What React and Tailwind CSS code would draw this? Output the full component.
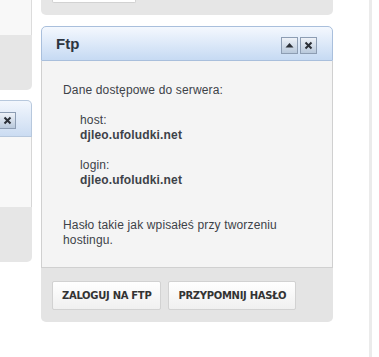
import React from 'react';

const HeadBtn = ({ children }) => (
  <div className="w-[17px] h-[17px] border border-[#8d9db3] bg-gradient-to-b from-[#eef2f8] to-[#b9c9dc] flex items-center justify-center">
    {children}
  </div>
);

const CloseIcon = () => (
  <svg width="9" height="9" viewBox="0 0 9 9">
    <path d="M1.5 1.5 L7.5 7.5 M7.5 1.5 L1.5 7.5" stroke="#2b2f36" strokeWidth="2" />
  </svg>
);

const UpIcon = () => (
  <svg width="9" height="6" viewBox="0 0 9 6">
    <path d="M0.5 5.5 L4.5 1 L8.5 5.5 Z" fill="#2b2f36" />
  </svg>
);

const FootBtn = ({ label }) => (
  <button className="h-[29px] px-[9px] bg-gradient-to-b from-[#ffffff] to-[#f0f0f0] border border-[#d2d2d2] rounded-[2px] text-[10px] font-bold text-[#333] font-['DejaVu_Sans',sans-serif] tracking-[-0.3px]">
    {label}
  </button>
);

export default function App() {
  return (
    <div className="w-[379px] h-[357px] bg-white flex overflow-hidden font-['Liberation_Sans',Arial,sans-serif]">
      {/* left column, cut off */}
      <div className="w-[32px] shrink-0 flex flex-col">
        <div className="h-[35px] bg-[#f8f8f8] border-r border-[#dcdcdc]" />
        <div className="h-[55px] bg-[#e6e6e6] rounded-br-[5px]" />
        <div className="mt-[10px] flex flex-col">
          <div className="h-[37px] rounded-tr-[5px] border border-l-0 border-[#b7c8dd] bg-gradient-to-b from-[#f3f7fd] to-[#cbdcf2] flex items-center">
            <div className="w-[16px] h-[17px] border border-l-0 border-[#8d9db3] bg-gradient-to-b from-[#eef2f8] to-[#b9c9dc] flex items-center justify-center mt-[4px]">
              <CloseIcon />
            </div>
          </div>
          <div className="h-[70px] bg-[#f8f8f8] border-r border-[#d6d6d6]" />
          <div className="h-[55px] bg-[#e6e6e6] rounded-br-[5px]" />
        </div>
      </div>

      {/* main column */}
      <div className="ml-[9px] w-[292px] shrink-0 flex flex-col">
        <div className="h-[15px] bg-[#e6e6e6] rounded-b-[5px] relative">
          <div className="absolute left-[11px] top-0 w-[84px] h-[3px] bg-white border border-t-0 border-[#d2d2d2] rounded-b-[2px]" />
        </div>

        <div className="mt-[11px] flex flex-col">
          <div className="h-[35px] rounded-t-[5px] border border-[#a9bfdc] bg-gradient-to-b from-[#f4f8fe] to-[#c6daf3] flex items-center justify-between pl-[14px] pr-[15px]">
            <span className="text-[15px] font-bold text-[#2d3540] pt-[1px]">Ftp</span>
            <div className="flex gap-[2px] mt-[3px]">
              <HeadBtn><UpIcon /></HeadBtn>
              <HeadBtn><CloseIcon /></HeadBtn>
            </div>
          </div>
          <div className="h-[207px] bg-[#f4f4f4] border-x border-b border-[#d0d0d0] pl-[21px] pt-[22px] text-[12px] leading-[15px] text-[#3d4248] tracking-[0.15px]">
            <p>Dane dostępowe do serwera:</p>
            <div className="pl-[17px] mt-[15px]">
              <p>host:</p>
              <p className="font-bold">djleo.ufoludki.net</p>
              <p className="mt-[15px]">login:</p>
              <p className="font-bold">djleo.ufoludki.net</p>
            </div>
            <p className="mt-[30px]">Hasło takie jak wpisałeś przy tworzeniu<br />hostingu.</p>
          </div>
          <div className="h-[54px] bg-[#e4e4e4] rounded-b-[5px] flex items-center gap-[7px] pl-[11px]">
            <FootBtn label="ZALOGUJ NA FTP" />
            <FootBtn label="PRZYPOMNIJ HASŁO" />
          </div>
        </div>
      </div>

      {/* right edge */}
      <div className="ml-[36px] w-[3px] h-full bg-[#ebebeb]" />
    </div>
  );
}
